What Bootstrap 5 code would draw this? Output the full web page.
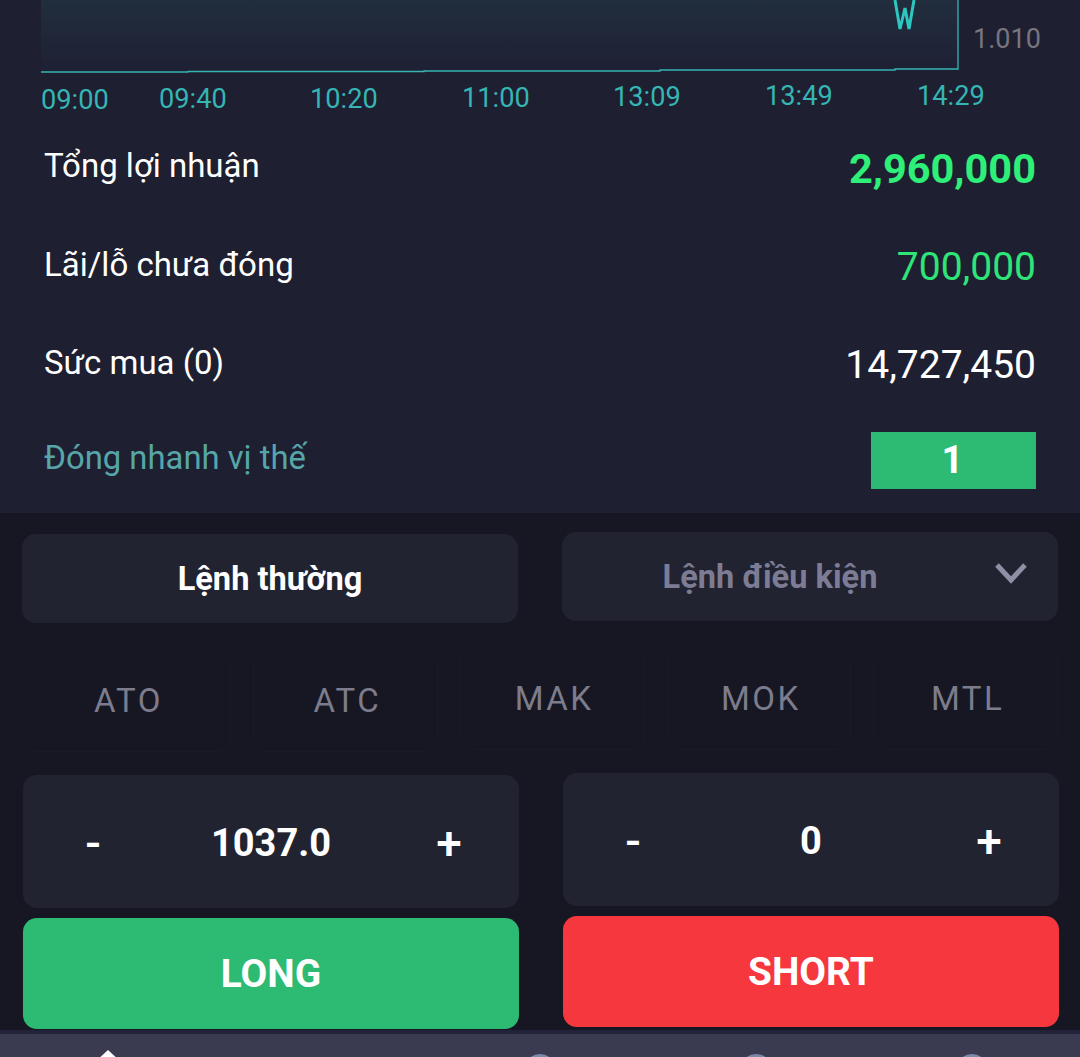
<!DOCTYPE html>
<html>
<head>
  <title>Giao dịch</title>
  <meta charset="UTF-8">
  <link href="https://cdn.jsdelivr.net/npm/bootstrap@5.3.0/dist/css/bootstrap.min.css" rel="stylesheet">
  <style>
    html, body { height: 1057px; overflow: hidden; }
    body { background: #1e1f31; color: #fff; font-family: Roboto, "Liberation Sans", sans-serif; }
    .chart-box { display: block; height: 122px; }
    .chart-box text { font-family: Roboto, "Liberation Sans", sans-serif; font-size: 27.2px; fill: #35b5b4; }
    .chart-box .price-tick { fill: #77767f; font-size: 27px; }

    .info-wrap { height: 393px; margin-top: -2px; padding: 0 44px 0 44px; }
    .info-row { height: 98px; }
    .info-label { font-size: 33px; margin-top: -4px; }
    .info-label-first { margin-top: -6px; }
    .info-value { font-size: 39px; }
    .info-total { font-size: 41.5px; font-weight: 700; color: #2eef78; }
    .info-green { color: #2ee677; }
    .quick-row { margin-top: -3px; }
    .quick-label { color: #56a6a9; font-size: 32.8px; margin-top: -2px; }
    .quick-btn { width: 165px; height: 57px; background: #2dba73; border: 0; border-radius: 0; color: #fff; font-size: 38px; font-weight: 700; line-height: 57px; padding: 0 2px 0 0; }

    .order-panel { height: 517px; background: #161722; padding: 21px 21px 0 22px; }
    .two-col { display: flex; gap: 44px; align-items: flex-start; }
    .two-col > * { width: 496px; }
    .lift { margin-top: -2px; }
    .nudge { margin-left: 1px; }
    .tab-btn { height: 89px; background: #212330; border: 0; border-radius: 14px; font-size: 32.6px; font-weight: 700; color: #fff; padding-top: 8px; }
    .tab-btn.is-off { color: #7c7c94; position: relative; padding-right: 92px; }
    .tab-arrow { position: absolute; right: 30px; top: 30px; }

    .type-row { margin-top: 27px; margin-bottom: 23px; gap: 22px; align-items: flex-start; margin-left: 1px; margin-right: 1px; }
    .type-btn { flex: 1 1 0; height: 102px; background: transparent; border: 0; border-right: 1px solid #1a1b27; border-bottom: 1px solid #1a1b27; border-radius: 14px; color: #7c7c8c; font-size: 33px; letter-spacing: 2.5px; padding: 0 0 0 4px; }
    .type-btn:first-child { flex: 0 0 208px; }
    .type-btn:nth-child(n+2) { border-left: 1px solid #1a1b27; }

    .stepper { height: 133px; background: #212330; border-radius: 14px; font-size: 38px; font-weight: 700; padding-top: 4px; }
    .stepper span { width: 140px; text-align: center; }
    .stepper .step-value { flex: 1; }
    .stepper .step-sign { font-weight: 500; font-size: 46px; }

    .trade-row { margin-top: 10px; }
    .trade-btn { height: 111px; border: 0; border-radius: 14px; color: #fff; font-size: 38.8px; font-weight: 700; padding-top: 8px; }
    .trade-long { background: #2dba73; }
    .trade-short { background: #f6383e; }

    .bottom-nav { height: 27px; background: #3a3a50; border-top: 4px solid #22233a; overflow: hidden; }
    .bottom-nav > div { flex: 1 1 0; text-align: center; }
    .bottom-nav svg { display: block; margin: 0 auto; }
  </style>
</head>
<body>

<svg class="chart-box" width="1080" height="122" viewBox="0 0 1080 122">
  <defs>
    <linearGradient id="areaFill" x1="0" y1="0" x2="0" y2="1">
      <stop offset="0" stop-color="#212e3e"/>
      <stop offset="1" stop-color="#1e2033"/>
    </linearGradient>
  </defs>
  <rect x="41" y="0" width="917" height="71" fill="url(#areaFill)"/>
  <path d="M41 72H188V71.5H424V71H660V70H895V69H958V0" fill="none" stroke="#35b5b4" stroke-width="1.3"/>
  <path d="M895 0L900 29L905 8L909 29L914 0" fill="none" stroke="#2cc7c0" stroke-width="3"/>
  <text x="973" y="48" class="price-tick">1.010</text>
  <text x="41" y="109">09:00</text>
  <text x="159" y="108">09:40</text>
  <text x="310" y="108">10:20</text>
  <text x="462" y="107">11:00</text>
  <text x="613" y="106">13:09</text>
  <text x="765" y="105">13:49</text>
  <text x="917" y="105">14:29</text>
</svg>

<div class="info-wrap">
  <div class="info-row d-flex justify-content-between align-items-center">
    <div class="info-label info-label-first">Tổng lợi nhuận</div>
    <div class="info-value info-total">2,960,000</div>
  </div>
  <div class="info-row d-flex justify-content-between align-items-center">
    <div class="info-label">Lãi/lỗ chưa đóng</div>
    <div class="info-value info-green">700,000</div>
  </div>
  <div class="info-row d-flex justify-content-between align-items-center">
    <div class="info-label">Sức mua (0)</div>
    <div class="info-value">14,727,450</div>
  </div>
  <div class="info-row quick-row d-flex justify-content-between align-items-center">
    <div class="info-label quick-label">Đóng nhanh vị thế</div>
    <button class="btn quick-btn">1</button>
  </div>
</div>

<div class="order-panel">
  <div class="two-col">
    <button class="btn tab-btn">Lệnh thường</button>
    <button class="btn tab-btn is-off lift">
      Lệnh điều kiện
      <svg class="tab-arrow" width="34" height="24" viewBox="0 0 34 24"><path d="M3 3L17 18L31 3" fill="none" stroke="#8f8fa6" stroke-width="5"/></svg>
    </button>
  </div>

  <div class="type-row d-flex">
    <button class="btn type-btn">ATO</button>
    <button class="btn type-btn">ATC</button>
    <button class="btn type-btn lift">MAK</button>
    <button class="btn type-btn lift">MOK</button>
    <button class="btn type-btn lift">MTL</button>
  </div>

  <div class="two-col nudge">
    <div class="stepper d-flex align-items-center"><span class="step-sign">-</span><span class="step-value">1037.0</span><span class="step-sign">+</span></div>
    <div class="stepper d-flex align-items-center lift"><span class="step-sign">-</span><span class="step-value">0</span><span class="step-sign">+</span></div>
  </div>

  <div class="two-col trade-row nudge">
    <button class="btn trade-btn trade-long">LONG</button>
    <button class="btn trade-btn trade-short lift">SHORT</button>
  </div>
</div>

<div class="bottom-nav d-flex">
  <div><svg width="40" height="23" viewBox="0 0 40 23"><path d="M20 16L8 27H32Z" fill="#fff"/></svg></div>
  <div></div>
  <div><svg width="40" height="23" viewBox="0 0 40 23"><circle cx="20" cy="36" r="16" fill="#7d88a8"/></svg></div>
  <div><svg width="40" height="23" viewBox="0 0 40 23"><circle cx="20" cy="36" r="16" fill="#7d88a8"/></svg></div>
  <div><svg width="40" height="23" viewBox="0 0 40 23"><circle cx="20" cy="36" r="16" fill="#7d88a8"/></svg></div>
</div>

<script src="https://cdn.jsdelivr.net/npm/bootstrap@5.3.0/dist/js/bootstrap.bundle.min.js"></script>
</body>
</html>
